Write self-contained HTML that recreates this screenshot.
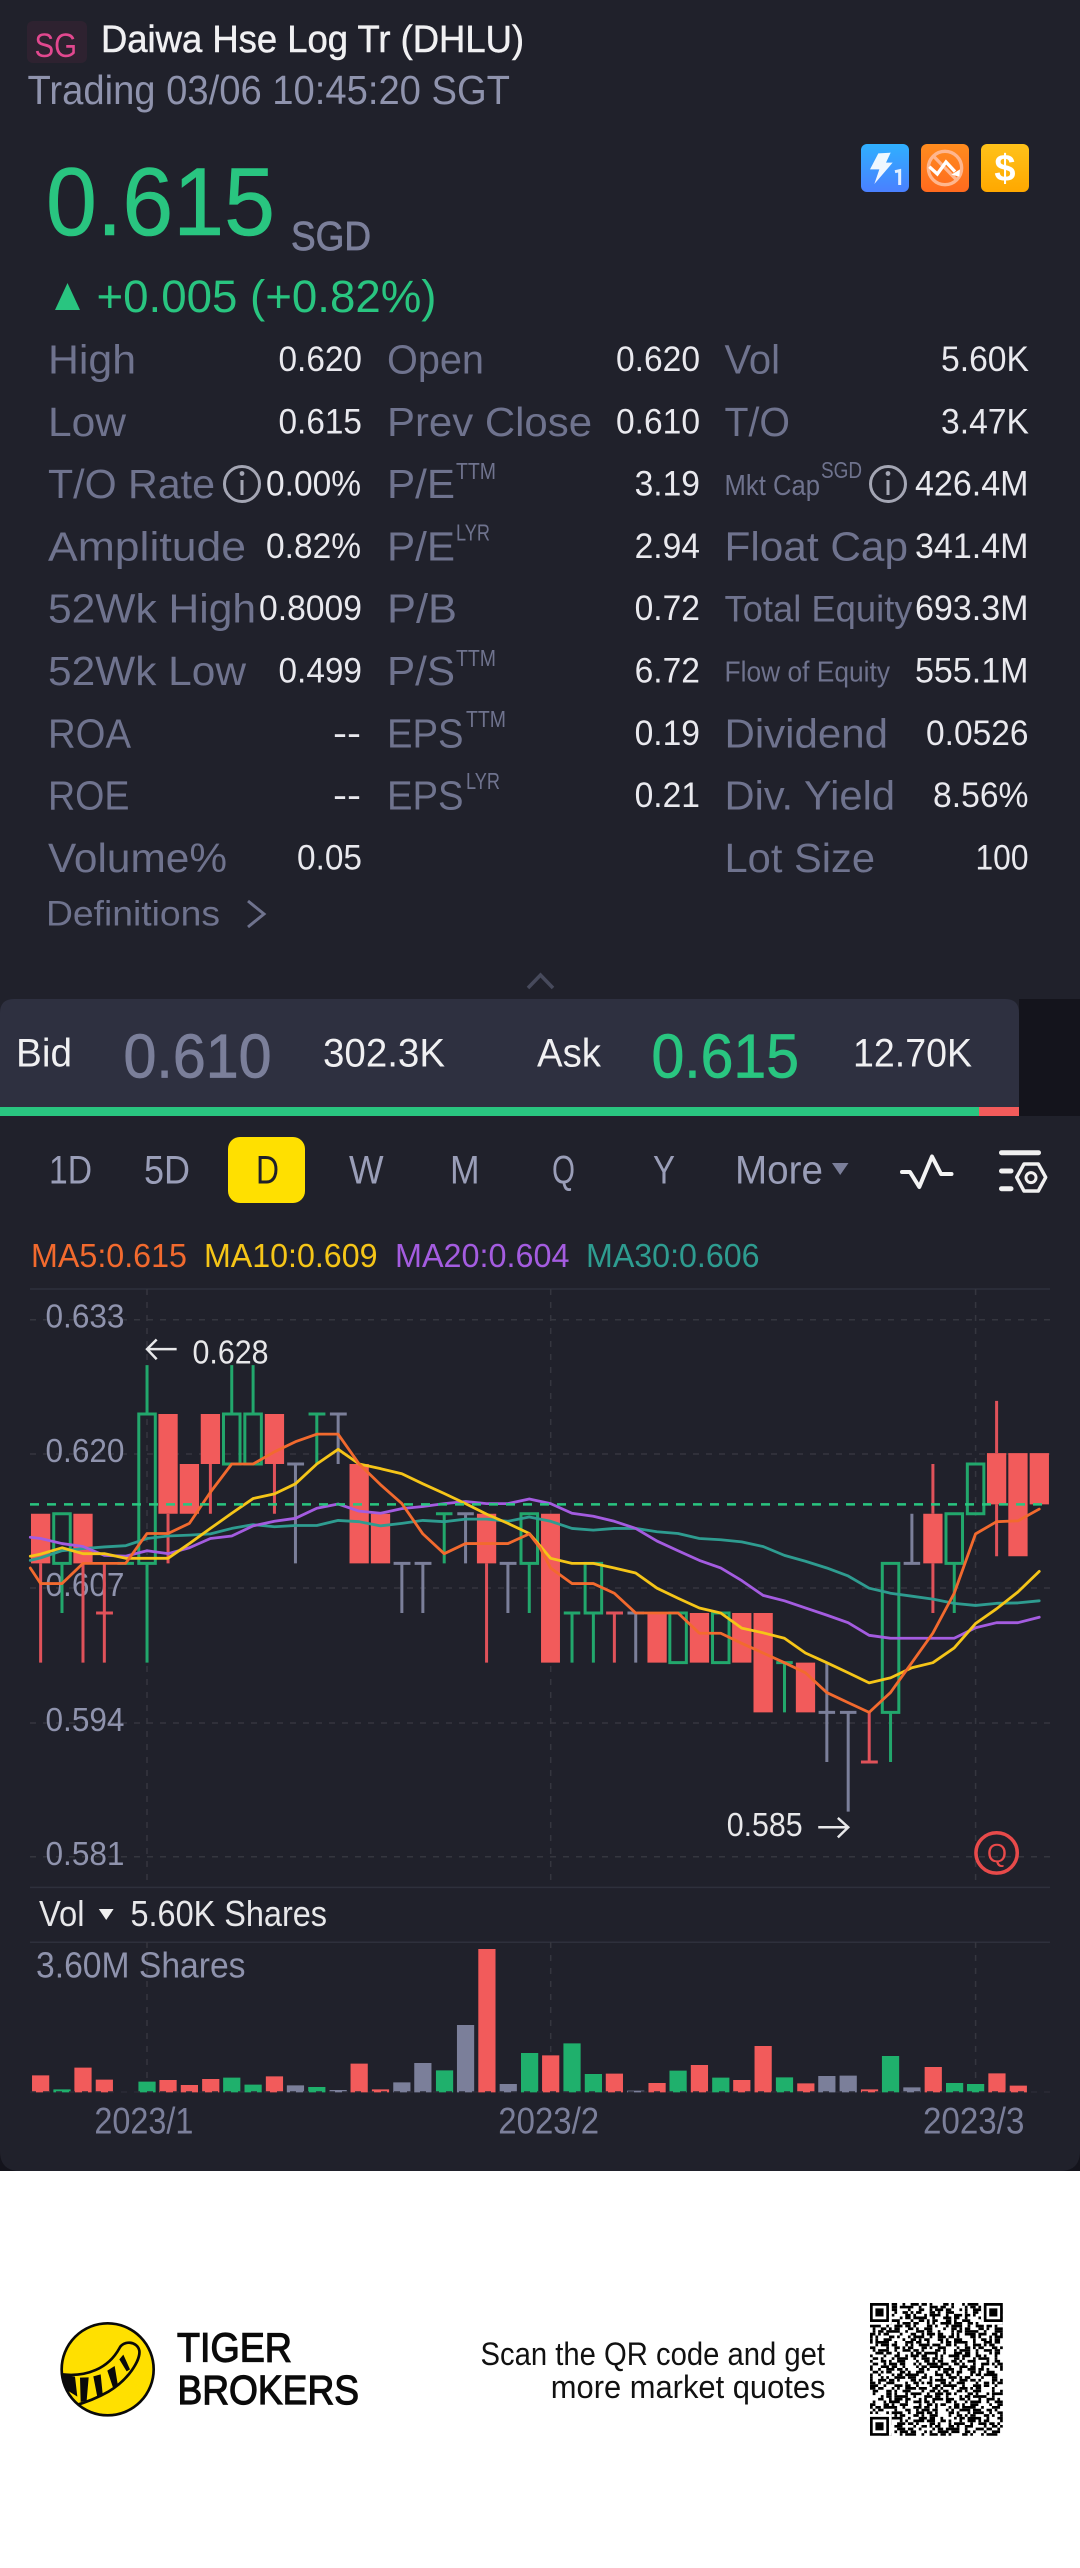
<!DOCTYPE html>
<html lang="en"><head><meta charset="utf-8"><title>Daiwa Hse Log Tr (DHLU)</title>
<style>
html,body{margin:0;padding:0;background:#fff;width:1080px;height:2568px;overflow:hidden}
svg{display:block}
text{font-family:"Liberation Sans",sans-serif;white-space:pre}
.l{font-size:41px;fill:#6f738e}
.v{font-size:35px;fill:#e9e9ee}
.s{font-size:23px;fill:#6f738e}
.m{font-size:29px;fill:#6f738e}
.tb{font-size:40px;fill:#9a9eb8}
.ax{font-size:33px;fill:#8f93ad}
.w{font-size:33px;fill:#e8e8ea}
.d{font-size:37px;fill:#7b7f9a}
.n{vector-effect:non-scaling-stroke;fill:none}
.r{stroke:#e0525a;stroke-width:3}
.g{stroke:#22a76c;stroke-width:3}
.y{stroke:#7b7f9a;stroke-width:3}
.ma{stroke-width:2.8;stroke-linejoin:round;stroke-linecap:round}
.grid{stroke:#35363f;stroke-width:1.5;stroke-dasharray:6 7;fill:none}
.solid{stroke:#2e303c;stroke-width:1.5}
.qa{stroke-dasharray:2 1 1 3 1 1 4 2 1 2 3 1 2 1 1 4}
.qb{stroke-dasharray:1 2 3 1 1 1 2 4 1 3 2 2 1 1 3}
.qc{stroke-dasharray:3 1 2 2 1 4 1 1 2 1 5 2 1 3}
.qd{stroke-dasharray:1 1 2 3 2 1 1 2 3 4 1 2 2 1}
</style></head><body>
<svg xmlns="http://www.w3.org/2000/svg" width="1080" height="2568" viewBox="0 0 1080 2568">
<defs>
<linearGradient id="gb" x1="0" y1="0" x2="0" y2="1"><stop offset="0" stop-color="#2fb0ff"/><stop offset="1" stop-color="#4a80ff"/></linearGradient>
<linearGradient id="go" x1="0" y1="0" x2="0" y2="1"><stop offset="0" stop-color="#ff8c1e"/><stop offset="1" stop-color="#ff6a1e"/></linearGradient>
<linearGradient id="gy" x1="0" y1="0" x2="0" y2="1"><stop offset="0" stop-color="#ffc21a"/><stop offset="1" stop-color="#ffa800"/></linearGradient>
<clipPath id="lc"><circle cx="233" cy="268" r="138"/></clipPath>
</defs>
<rect width="1080" height="2568" fill="#fff"/>
<rect width="1080" height="2171" fill="#14141c"/>
<path d="M0 0H1080V2151Q1080 2171 1060 2171H20Q0 2171 0 2151Z" fill="#20212b"/>

<!-- header -->
<rect x="27" y="21" width="60" height="42" rx="6" fill="#2e2230"/>
<text x="34.5" y="57" font-size="34" fill="#e2488f" textLength="42.5" lengthAdjust="spacingAndGlyphs">SG</text>
<text x="101" y="52" font-size="38" fill="#f0f0f2" stroke="#f0f0f2" stroke-width=".5" textLength="423" lengthAdjust="spacingAndGlyphs">Daiwa Hse Log Tr (DHLU)</text>
<text x="27.5" y="104" font-size="40.5" fill="#8f93ad" textLength="482.5" lengthAdjust="spacingAndGlyphs">Trading 03/06 10:45:20 SGT</text>
<text x="46" y="235" font-size="96.5" fill="#29c580" stroke="#29c580" stroke-width=".6" textLength="229" lengthAdjust="spacingAndGlyphs">0.615</text>
<text x="291" y="250" font-size="41" fill="#7b7f9a" stroke="#7b7f9a" stroke-width=".8" textLength="80" lengthAdjust="spacingAndGlyphs">SGD</text>
<path d="M67.5 283L80 310H55Z" fill="#29c580"/>
<text x="96.5" y="312" font-size="45.5" fill="#29c580" textLength="340" lengthAdjust="spacingAndGlyphs">+0.005 (+0.82%)</text>

<!-- badges -->
<rect x="861" y="144" width="48" height="48" rx="6" fill="url(#gb)"/>
<g transform="translate(840 130) scale(.33333)">
<path d="M115 70L152 68L138 98L158 98L103 162L118 118L90 118Z" fill="#fff" fill-opacity=".92"/>
<path d="M165 125L179 122V165" fill="none" stroke="#fff" stroke-opacity=".85" stroke-width="9"/>
</g>
<rect x="921" y="144" width="48" height="48" rx="6" fill="url(#go)"/>
<g transform="translate(840 130) scale(.33333)">
<circle cx="315" cy="114" r="50" fill="none" stroke="#ffb68e" stroke-width="10"/>
<path d="M280 78L350 150" stroke="#ffb68e" stroke-width="10"/>
<path d="M268 110L292 132L318 96L345 125" fill="none" stroke="#fff" stroke-width="10"/>
<path d="M360 118L358 140L334 134Z" fill="#fff"/>
</g>
<rect x="981" y="144" width="48" height="48" rx="6" fill="url(#gy)"/>
<text x="1005" y="181" font-size="38" font-weight="700" fill="#fff" text-anchor="middle">$</text>

<!-- stats labels col1 -->
<g transform="translate(0 1)">
<text class="l" x="48" y="372.5" textLength="88" lengthAdjust="spacingAndGlyphs">High</text>
<text class="l" x="48" y="434.8" textLength="78" lengthAdjust="spacingAndGlyphs">Low</text>
<text class="l" x="48" y="497.1" textLength="167" lengthAdjust="spacingAndGlyphs">T/O Rate</text>
<text class="l" x="48" y="559.4" textLength="198" lengthAdjust="spacingAndGlyphs">Amplitude</text>
<text class="l" x="48" y="621.7" textLength="208" lengthAdjust="spacingAndGlyphs">52Wk High</text>
<text class="l" x="48" y="684" textLength="198" lengthAdjust="spacingAndGlyphs">52Wk Low</text>
<text class="l" x="48" y="746.3" textLength="83" lengthAdjust="spacingAndGlyphs">ROA</text>
<text class="l" x="48" y="808.6" textLength="81.5" lengthAdjust="spacingAndGlyphs">ROE</text>
<text class="l" x="48" y="871" textLength="179" lengthAdjust="spacingAndGlyphs">Volume%</text>
</g>
<text x="46" y="925.5" font-size="35" fill="#6f738e" textLength="174" lengthAdjust="spacingAndGlyphs">Definitions</text>
<path d="M248 901L264 914L248 927" fill="none" stroke="#6f738e" stroke-width="3"/>

<!-- col1 values -->
<g transform="translate(1 0)">
<text class="v" x="277.5" y="371" textLength="83.5" lengthAdjust="spacingAndGlyphs">0.620</text>
<text class="v" x="277.5" y="433.3" textLength="83.5" lengthAdjust="spacingAndGlyphs">0.615</text>
<text class="v" x="265" y="495.6" textLength="95" lengthAdjust="spacingAndGlyphs">0.00%</text>
<text class="v" x="265" y="557.9" textLength="95" lengthAdjust="spacingAndGlyphs">0.82%</text>
<text class="v" x="258" y="620.2" textLength="103" lengthAdjust="spacingAndGlyphs">0.8009</text>
<text class="v" x="277.5" y="682.5" textLength="83.5" lengthAdjust="spacingAndGlyphs">0.499</text>
<text class="v" x="332" y="744.8" textLength="28" lengthAdjust="spacingAndGlyphs">--</text>
<text class="v" x="332" y="807.1" textLength="28" lengthAdjust="spacingAndGlyphs">--</text>
<text class="v" x="296" y="869.4" textLength="65" lengthAdjust="spacingAndGlyphs">0.05</text>
</g>

<!-- info icons -->
<g fill="none" stroke="#a4a6b4" stroke-width="3"><circle cx="242" cy="484" r="17.5"/><circle cx="888" cy="484" r="17.5"/><path d="M242 480V495M888 480V495"/></g>
<circle cx="242" cy="473.5" r="2.4" fill="#a4a6b4"/><circle cx="888" cy="473.5" r="2.4" fill="#a4a6b4"/>

<!-- col2 -->
<g transform="translate(0 1)">
<text class="l" x="387" y="372.5" textLength="97" lengthAdjust="spacingAndGlyphs">Open</text>
<text class="l" x="387" y="434.8" textLength="205" lengthAdjust="spacingAndGlyphs">Prev Close</text>
<text class="l" x="387" y="497.1" textLength="68" lengthAdjust="spacingAndGlyphs">P/E</text>
<text class="s" x="456" y="478" textLength="40" lengthAdjust="spacingAndGlyphs">TTM</text>
<text class="l" x="387" y="559.4" textLength="68" lengthAdjust="spacingAndGlyphs">P/E</text>
<text class="s" x="456" y="539.5" textLength="34" lengthAdjust="spacingAndGlyphs">LYR</text>
<text class="l" x="387" y="621.7" textLength="70" lengthAdjust="spacingAndGlyphs">P/B</text>
<text class="l" x="387" y="684" textLength="68" lengthAdjust="spacingAndGlyphs">P/S</text>
<text class="s" x="456" y="665" textLength="40" lengthAdjust="spacingAndGlyphs">TTM</text>
<text class="l" x="387" y="746.3" textLength="76.5" lengthAdjust="spacingAndGlyphs">EPS</text>
<text class="s" x="466" y="726" textLength="40" lengthAdjust="spacingAndGlyphs">TTM</text>
<text class="l" x="387" y="808.6" textLength="76.5" lengthAdjust="spacingAndGlyphs">EPS</text>
<text class="s" x="466" y="788" textLength="34" lengthAdjust="spacingAndGlyphs">LYR</text>
</g>
<g transform="translate(1 0)">
<text class="v" x="615" y="371" textLength="84" lengthAdjust="spacingAndGlyphs">0.620</text>
<text class="v" x="615" y="433.3" textLength="84" lengthAdjust="spacingAndGlyphs">0.610</text>
<text class="v" x="633.6" y="495.6" textLength="65.4" lengthAdjust="spacingAndGlyphs">3.19</text>
<text class="v" x="633.6" y="557.9" textLength="65.4" lengthAdjust="spacingAndGlyphs">2.94</text>
<text class="v" x="633.6" y="620.2" textLength="65.4" lengthAdjust="spacingAndGlyphs">0.72</text>
<text class="v" x="633.6" y="682.5" textLength="65.4" lengthAdjust="spacingAndGlyphs">6.72</text>
<text class="v" x="633.6" y="744.8" textLength="65.4" lengthAdjust="spacingAndGlyphs">0.19</text>
<text class="v" x="633.6" y="807.1" textLength="65.4" lengthAdjust="spacingAndGlyphs">0.21</text>
</g>

<!-- col3 -->
<g transform="translate(0 1)">
<text class="l" x="724.5" y="372.5" textLength="55.5" lengthAdjust="spacingAndGlyphs">Vol</text>
<text class="l" x="724.5" y="434.8" textLength="65.5" lengthAdjust="spacingAndGlyphs">T/O</text>
<text class="m" x="724.5" y="494" textLength="95.5" lengthAdjust="spacingAndGlyphs">Mkt Cap</text>
<text class="s" x="821" y="477" textLength="41" lengthAdjust="spacingAndGlyphs">SGD</text>
<text class="l" x="724.5" y="559.4" textLength="183.5" lengthAdjust="spacingAndGlyphs">Float Cap</text>
<text x="724.5" y="620.7" font-size="37" fill="#6f738e" textLength="188" lengthAdjust="spacingAndGlyphs">Total Equity</text>
<text class="m" x="724.5" y="680.7" textLength="165.5" lengthAdjust="spacingAndGlyphs">Flow of Equity</text>
<text class="l" x="724.5" y="746.3" textLength="163.5" lengthAdjust="spacingAndGlyphs">Dividend</text>
<text class="l" x="724.5" y="808.6" textLength="170.5" lengthAdjust="spacingAndGlyphs">Div. Yield</text>
<text class="l" x="724.5" y="871" textLength="150.5" lengthAdjust="spacingAndGlyphs">Lot Size</text>
</g>
<g transform="translate(1 0)">
<text class="v" x="940" y="371" textLength="88" lengthAdjust="spacingAndGlyphs">5.60K</text>
<text class="v" x="940" y="433.3" textLength="88" lengthAdjust="spacingAndGlyphs">3.47K</text>
<text class="v" x="914" y="495.6" textLength="113.5" lengthAdjust="spacingAndGlyphs">426.4M</text>
<text class="v" x="914" y="557.9" textLength="113.5" lengthAdjust="spacingAndGlyphs">341.4M</text>
<text class="v" x="914" y="620.2" textLength="113.5" lengthAdjust="spacingAndGlyphs">693.3M</text>
<text class="v" x="914" y="682.5" textLength="113.5" lengthAdjust="spacingAndGlyphs">555.1M</text>
<text class="v" x="925" y="744.8" textLength="102.5" lengthAdjust="spacingAndGlyphs">0.0526</text>
<text class="v" x="932" y="807.1" textLength="95.5" lengthAdjust="spacingAndGlyphs">8.56%</text>
<text class="v" x="974.5" y="869.4" textLength="53" lengthAdjust="spacingAndGlyphs">100</text>
</g>

<!-- chevron -->
<path d="M528 988L540.5 975L553 988" fill="none" stroke="#474a5c" stroke-width="3.5"/>

<!-- bid ask -->
<rect x="1019" y="999" width="61" height="117" fill="#14141c"/>
<path d="M0 1013Q0 999 14 999H1005Q1019 999 1019 1013V1107H0Z" fill="#2e3040"/>
<rect x="0" y="1107" width="979" height="9" fill="#29c580"/>
<rect x="979" y="1107" width="40" height="9" fill="#f25b5b"/>
<text x="16" y="1066.7" font-size="40" fill="#f0f0f2" textLength="56" lengthAdjust="spacingAndGlyphs">Bid</text>
<text x="123.5" y="1077.7" font-size="62.5" fill="#7b7f9a" stroke="#7b7f9a" stroke-width=".8" textLength="148" lengthAdjust="spacingAndGlyphs">0.610</text>
<text x="323" y="1066.7" font-size="40" fill="#f0f0f2" textLength="122" lengthAdjust="spacingAndGlyphs">302.3K</text>
<text x="537" y="1066.7" font-size="40" fill="#f0f0f2" textLength="64" lengthAdjust="spacingAndGlyphs">Ask</text>
<text x="651.5" y="1077.7" font-size="62.5" fill="#29c580" stroke="#29c580" stroke-width=".8" textLength="147.5" lengthAdjust="spacingAndGlyphs">0.615</text>
<text x="853" y="1066.7" font-size="40" fill="#f0f0f2" textLength="119" lengthAdjust="spacingAndGlyphs">12.70K</text>

<!-- tabs -->
<rect x="228" y="1137" width="77" height="66" rx="12" fill="#ffe000"/>
<text class="tb" x="49" y="1183.5" textLength="43" lengthAdjust="spacingAndGlyphs">1D</text>
<text class="tb" x="144" y="1183.5" textLength="46" lengthAdjust="spacingAndGlyphs">5D</text>
<text x="256" y="1183.5" font-size="40" fill="#1f202a" textLength="23" lengthAdjust="spacingAndGlyphs">D</text>
<text class="tb" x="349" y="1183.5" textLength="34.6" lengthAdjust="spacingAndGlyphs">W</text>
<text class="tb" x="450" y="1183.5" textLength="29.6" lengthAdjust="spacingAndGlyphs">M</text>
<text class="tb" x="552" y="1183.5" textLength="23" lengthAdjust="spacingAndGlyphs">Q</text>
<text class="tb" x="653" y="1183.5" textLength="22" lengthAdjust="spacingAndGlyphs">Y</text>
<text class="tb" x="735" y="1183.5" textLength="88" lengthAdjust="spacingAndGlyphs">More</text>
<path d="M832 1163H848.5L840.2 1175Z" fill="#7b7f9a"/>
<path d="M902 1172H910L919.3 1187L932 1156.5L941 1174H951.5" fill="none" stroke="#f4f4f4" stroke-width="4" stroke-linecap="round" stroke-linejoin="round"/>
<g fill="none" stroke="#f0f0f0" stroke-linecap="round" stroke-linejoin="round">
<path d="M1001.5 1152.7H1038.5M1001.5 1171H1011M1001.5 1188.7H1011" stroke-width="5"/>
<path d="M1016.7 1177.3L1024 1164H1038.3L1045.7 1177.3L1038.3 1191H1024Z" stroke-width="3.5"/>
<circle cx="1031" cy="1177.6" r="5" stroke-width="3"/>
</g>

<!-- MA legend -->
<text x="31" y="1267" font-size="33" fill="#f26a2e" textLength="156" lengthAdjust="spacingAndGlyphs">MA5:0.615</text>
<text x="204" y="1267" font-size="33" fill="#f5c518" textLength="173.5" lengthAdjust="spacingAndGlyphs">MA10:0.609</text>
<text x="395" y="1267" font-size="33" fill="#a45ce0" textLength="174.5" lengthAdjust="spacingAndGlyphs">MA20:0.604</text>
<text x="586" y="1267" font-size="33" fill="#2e9c90" textLength="173.6" lengthAdjust="spacingAndGlyphs">MA30:0.606</text>

<!-- grid -->
<path class="solid" d="M30 1289H1050M30 1887.4H1050M30 1942.3H1050"/>
<path class="grid" d="M30 1319.7H1050M30 1454H1050M30 1588H1050M30 1723H1050M30 1856.7H1050"/>
<path class="grid" d="M147 1289V1887M550.7 1289V1887M975.6 1289V1887M147 1942V2092M550.7 1942V2092M975.6 1942V2092"/>

<!-- axis labels -->
<text class="ax" x="45.5" y="1327.7" textLength="79" lengthAdjust="spacingAndGlyphs">0.633</text>
<text class="ax" x="45.5" y="1462" textLength="79" lengthAdjust="spacingAndGlyphs">0.620</text>
<text class="ax" x="45.5" y="1596" textLength="79" lengthAdjust="spacingAndGlyphs">0.607</text>
<text class="ax" x="45.5" y="1731" textLength="79" lengthAdjust="spacingAndGlyphs">0.594</text>
<text class="ax" x="45.5" y="1865" textLength="79" lengthAdjust="spacingAndGlyphs">0.581</text>

<!-- candles left -->
<g transform="translate(0 1270) scale(.34435 .42088)">
<path fill="#f25b5b" d="M90 579H146V697H90ZM213 579H269V697H213ZM460 342H516V579H460ZM522 461H578V579H522ZM583 342H639V461H583ZM769 342H825V461H769ZM1015 461H1071V697H1015ZM1077 579H1133V697H1077ZM1385 579H1441V697H1385Z"/>
<path class="n r" d="M118 697V933M241 697V933M303 697V933M279 815H328M488 579V697M611 461V579M797 461V579M1413 697V933"/>
<path class="n g" d="M180 697V815M427 226V342M427 697V933M673 226V342M735 226V342M920 342V461M896 342H945M1290 579V697M1266 579H1314M1537 697V815M341 697H389"/>
<path class="n g" d="M156 579H204V697H156ZM403 342H451V697H403ZM649 342H697V461H649ZM711 342H759V461H711ZM1513 579H1561V697H1513Z"/>
<path class="n y" d="M858 461V697M834 461H883M982 342V461M958 342H1007M1167 697V815M1143 697H1192M1228 697V815M1204 697H1253M1352 579V697M1328 579H1376M1475 697V815M1451 697H1500"/>
<path class="n" stroke="#e8e8ea" stroke-width="2.5" d="M513 188H427M455 165L427 188L455 212"/>
</g>
<!-- candles right -->
<g transform="translate(540 1270) scale(.34435 .42088)">
<path fill="#f25b5b" d="M3 579H58V933H3ZM312 815H368V933H312ZM435 815H491V933H435ZM558 815H614V933H558ZM620 815H676V1051H620ZM743 933H799V1051H743ZM1113 579H1169V697H1113ZM1298 435H1354V557H1298ZM1360 435H1416V680H1360ZM1422 435H1478V557H1422Z"/>
<path class="n r" d="M216 815V933M192 815H241M956 1051V1169M932 1169H981M1141 461V579M1141 697V815M1326 311V435M1326 557V680"/>
<path class="n g" d="M93 815V933M69 815H117M155 815V933M710 933V1051M686 933H734M1018 1051V1169M1203 697V815"/>
<path class="n g" d="M131 697H179V815H131ZM377 815H425V933H377ZM501 815H549V933H501ZM994 697H1042V1051H994ZM1179 579H1227V697H1179ZM1241 461H1289V579H1241Z"/>
<path class="n y" d="M278 815V933M254 815H302M833 933V1169M809 1051H857M895 1051V1287M871 1051H919M1080 579V697M1056 697H1104"/>
<path class="n" stroke="#e8e8ea" stroke-width="2.5" d="M808 1324H895M865 1302L895 1324L865 1348"/>
<ellipse class="n" cx="1326" cy="1385" rx="60" ry="48" stroke="#e84a4a" stroke-width="3.5"/>
</g>
<text x="987" y="1862" font-size="26" fill="#e84a4a" textLength="20" lengthAdjust="spacingAndGlyphs">Q</text>
<text x="192.5" y="1363.4" font-size="33" fill="#e8e8ea" textLength="76" lengthAdjust="spacingAndGlyphs">0.628</text>
<text x="726.7" y="1836" font-size="33" fill="#e8e8ea" textLength="76" lengthAdjust="spacingAndGlyphs">0.585</text>

<!-- MA lines -->
<g transform="translate(0 1270) scale(.34435 .42088)">
<polyline class="n ma" stroke="#2e9c90" points="88,690 118,684 180,667 241,662 303,658 365,655 427,638 488,632 550,630 611,627 673,614 735,605 797,610 858,607 920,607 982,595 1043,598 1105,608 1167,602 1228,595 1290,598 1352,592 1413,592 1475,597 1537,587 1599,597 1661,614 1723,618 1784,614 1846,614 1908,622 1969,626 2031,638 2093,641 2154,646 2216,657 2278,678 2339,692 2401,708 2463,727 2524,756 2586,768 2648,775 2709,782 2771,792 2833,797 2894,792 2956,791 3018,786"/>
<polyline class="n ma" stroke="#a45ce0" points="88,635 118,638 180,650 241,657 303,678 365,680 427,667 488,674 550,660 611,638 673,632 735,608 797,597 858,590 920,566 982,556 1043,573 1105,578 1167,567 1228,562 1290,555 1352,550 1413,555 1475,555 1537,544 1599,555 1661,578 1723,585 1784,597 1846,614 1908,644 1969,667 2031,690 2093,708 2154,738 2216,773 2278,786 2339,803 2401,820 2463,838 2524,868 2586,875 2648,875 2709,875 2771,875 2833,850 2894,838 2956,838 3018,825"/>
<polyline class="n ma" stroke="#f5c518" points="88,680 118,675 180,660 241,674 303,674 365,685 427,685 488,685 550,650 611,614 673,578 735,543 797,532 858,508 920,461 982,426 1043,461 1105,472 1167,484 1228,508 1290,531 1352,555 1413,580 1475,602 1537,626 1568,655 1599,685 1661,697 1723,697 1784,708 1846,720 1908,756 1969,780 2031,803 2093,815 2154,851 2216,862 2278,875 2339,910 2401,933 2463,957 2524,981 2586,969 2648,945 2709,933 2771,898 2833,840 2894,805 2956,765 3018,716"/>
<polyline class="n ma" stroke="#f26a2e" points="88,708 118,745 180,745 241,697 303,697 365,697 427,626 488,626 550,602 611,528 673,461 735,461 797,432 858,408 920,390 982,390 1043,461 1105,510 1167,555 1228,627 1290,674 1352,650 1413,650 1475,650 1537,627 1568,660 1599,708 1661,745 1723,745 1784,768 1846,815 1908,815 1969,815 2031,863 2093,863 2154,887 2216,910 2278,933 2339,957 2401,1004 2463,1028 2524,1051 2586,1004 2648,933 2709,863 2771,768 2833,627 2894,598 2956,596 3018,568"/>
</g>
<path d="M30 1504.4H1050" stroke="#29c580" stroke-width="2.5" stroke-dasharray="9 8" fill="none"/>

<!-- vol header -->
<text x="39" y="1926" font-size="36" fill="#e8e8ea" textLength="45.5" lengthAdjust="spacingAndGlyphs">Vol</text>
<path d="M98.8 1909H113.6L106.2 1920Z" fill="#f0f0f0"/>
<text x="130.5" y="1926" font-size="36" fill="#e8e8ea" textLength="196.5" lengthAdjust="spacingAndGlyphs">5.60K Shares</text>
<text x="36" y="1977.5" font-size="36" fill="#8f93ad" textLength="209.5" lengthAdjust="spacingAndGlyphs">3.60M Shares</text>

<!-- volume bars -->
<g transform="translate(0 1880) scale(.34435 .33333)">
<path fill="#f25b5b" d="M93 586H143V637H93ZM216 563H266V637H216ZM278 599H328V637H278ZM463 600H513V637H463ZM525 615H575V637H525ZM587 597H637V637H587ZM772 589H822V637H772ZM1018 551H1068V637H1018ZM1080 628H1130V637H1080ZM1389 207H1439V637H1389Z"/>
<path fill="#1fb06c" d="M155 628H205V637H155ZM402 605H452V637H402ZM648 593H698V637H648ZM710 614H760V637H710ZM895 621H945V637H895ZM1266 571H1316V637H1266ZM1513 519H1563V637H1513Z"/>
<path fill="#7b7f9a" d="M833 616H883V637H833ZM957 630H1007V637H957ZM1142 607H1192V637H1142ZM1203 549H1253V637H1203ZM1327 435H1377V637H1327ZM1451 612H1501V637H1451Z"/>
</g>
<g transform="translate(540 1880) scale(.34435 .33333)">
<path fill="#f25b5b" d="M6 526H56V637H6ZM191 581H241V637H191ZM315 609H365V637H315ZM438 555H488V637H438ZM561 600H611V637H561ZM623 498H673V637H623ZM747 610H797V637H747ZM932 628H982V637H932ZM1117 561H1167V637H1117ZM1302 580H1352V637H1302ZM1364 617H1414V637H1364Z"/>
<path fill="#1fb06c" d="M68 490H118V637H68ZM130 582H180V637H130ZM376 572H426V637H376ZM500 593H550V637H500ZM685 592H735V637H685ZM993 528H1043V637H993ZM1179 609H1229V637H1179ZM1240 612H1290V637H1240Z"/>
<path fill="#7b7f9a" d="M253 632H303V637H253ZM808 588H858V637H808ZM870 587H920V637H870ZM1055 622H1105V637H1055Z"/>
</g>
<path d="M30 2092H1050" stroke="#2a2b36" stroke-width="1.5" stroke-dasharray="6 7" fill="none"/>

<!-- dates -->
<text class="d" x="94.4" y="2133.5" textLength="99" lengthAdjust="spacingAndGlyphs">2023/1</text>
<text class="d" x="498.3" y="2133.5" textLength="100.8" lengthAdjust="spacingAndGlyphs">2023/2</text>
<text class="d" x="923" y="2133.5" textLength="101.4" lengthAdjust="spacingAndGlyphs">2023/3</text>

<!-- footer logo -->
<g transform="translate(30 2280) scale(.33333)">
<circle cx="233" cy="268" r="138" fill="#ffe000" stroke="#0a0a0a" stroke-width="8"/>
<g clip-path="url(#lc)">
<path d="M95 283C170 292 235 265 268 205C280 180 322 183 328 212C332 240 295 300 235 335C205 352 175 365 130 378" fill="none" stroke="#0a0a0a" stroke-width="8"/>
<path fill="#0a0a0a" d="M95 283L135 290L142 350L110 330ZM150 293L176 292L170 362L152 366ZM190 289L212 283L218 342L202 351ZM232 272L254 258L264 318L250 326ZM268 238L280 224L300 268L290 274Z"/>
</g>
</g>
<text x="177" y="2361.7" font-size="41" fill="#0a0a0a" stroke="#0a0a0a" stroke-width="1.2" textLength="115" lengthAdjust="spacingAndGlyphs">TIGER</text>
<text x="177.5" y="2404" font-size="41" fill="#0a0a0a" stroke="#0a0a0a" stroke-width="1.2" textLength="181.5" lengthAdjust="spacingAndGlyphs">BROKERS</text>
<text x="480.5" y="2365" font-size="32" fill="#111" textLength="344.5" lengthAdjust="spacingAndGlyphs">Scan the QR code and get</text>
<text x="550.8" y="2398" font-size="32" fill="#111" textLength="274.7" lengthAdjust="spacingAndGlyphs">more market quotes</text>

<!-- QR -->
<g transform="translate(870 2303) scale(2.71)" stroke="#000" stroke-width="1" fill="none">
<path class="qa" d="M0 .5H49" stroke-dashoffset="3"/>
<path class="qc" d="M0 1.5H49" stroke-dashoffset="7"/>
<path class="qb" d="M0 2.5H49" stroke-dashoffset="1"/>
<path class="qd" d="M0 3.5H49" stroke-dashoffset="11"/>
<path class="qa" d="M0 4.5H49" stroke-dashoffset="17"/>
<path class="qc" d="M0 5.5H49" stroke-dashoffset="2"/>
<path class="qd" d="M0 6.5H49" stroke-dashoffset="5"/>
<path class="qb" d="M0 7.5H49" stroke-dashoffset="13"/>
<path class="qa" d="M0 8.5H49" stroke-dashoffset="9"/>
<path class="qd" d="M0 9.5H49" stroke-dashoffset="19"/>
<path class="qc" d="M0 10.5H49" stroke-dashoffset="12"/>
<path class="qb" d="M0 11.5H49" stroke-dashoffset="4"/>
<path class="qa" d="M0 12.5H49" stroke-dashoffset="23"/>
<path class="qd" d="M0 13.5H49" stroke-dashoffset="8"/>
<path class="qc" d="M0 14.5H49" stroke-dashoffset="16"/>
<path class="qb" d="M0 15.5H49" stroke-dashoffset="21"/>
<path class="qd" d="M0 16.5H49" stroke-dashoffset="14"/>
<path class="qa" d="M0 17.5H49" stroke-dashoffset="6"/>
<path class="qc" d="M0 18.5H49" stroke-dashoffset="27"/>
<path class="qb" d="M0 19.5H49" stroke-dashoffset="10"/>
<path class="qa" d="M0 20.5H49" stroke-dashoffset="29"/>
<path class="qd" d="M0 21.5H49" stroke-dashoffset="3"/>
<path class="qb" d="M0 22.5H49" stroke-dashoffset="18"/>
<path class="qc" d="M0 23.5H49" stroke-dashoffset="25"/>
<path class="qa" d="M0 24.5H49" stroke-dashoffset="12"/>
<path class="qd" d="M0 25.5H49" stroke-dashoffset="22"/>
<path class="qc" d="M0 26.5H49" stroke-dashoffset="5"/>
<path class="qb" d="M0 27.5H49" stroke-dashoffset="30"/>
<path class="qa" d="M0 28.5H49" stroke-dashoffset="15"/>
<path class="qd" d="M0 29.5H49" stroke-dashoffset="7"/>
<path class="qc" d="M0 30.5H49" stroke-dashoffset="20"/>
<path class="qb" d="M0 31.5H49" stroke-dashoffset="26"/>
<path class="qd" d="M0 32.5H49" stroke-dashoffset="1"/>
<path class="qa" d="M0 33.5H49" stroke-dashoffset="24"/>
<path class="qc" d="M0 34.5H49" stroke-dashoffset="9"/>
<path class="qb" d="M0 35.5H49" stroke-dashoffset="16"/>
<path class="qa" d="M0 36.5H49" stroke-dashoffset="2"/>
<path class="qd" d="M0 37.5H49" stroke-dashoffset="28"/>
<path class="qc" d="M0 38.5H49" stroke-dashoffset="13"/>
<path class="qb" d="M0 39.5H49" stroke-dashoffset="6"/>
<path class="qa" d="M0 40.5H49" stroke-dashoffset="31"/>
<path class="qd" d="M0 41.5H49" stroke-dashoffset="17"/>
<path class="qc" d="M0 42.5H49" stroke-dashoffset="11"/>
<path class="qb" d="M0 43.5H49" stroke-dashoffset="23"/>
<path class="qa" d="M0 44.5H49" stroke-dashoffset="8"/>
<path class="qd" d="M0 45.5H49" stroke-dashoffset="4"/>
<path class="qc" d="M0 46.5H49" stroke-dashoffset="19"/>
<path class="qb" d="M0 47.5H49" stroke-dashoffset="14"/>
<path class="qa" d="M0 48.5H49" stroke-dashoffset="26"/>
</g>
<g transform="translate(870 2303) scale(2.71)">
<path fill="#fff" d="M0 0H8V8H0ZM41 0H49V8H41ZM0 41H8V49H0Z"/>
<path fill="#000" fill-rule="evenodd" d="M0 0H7V7H0ZM1 1V6H6V1ZM2 2H5V5H2ZM42 0H49V7H42ZM43 1V6H48V1ZM44 2H47V5H44ZM0 42H7V49H0ZM1 43V48H6V43ZM2 44H5V47H2Z"/>
</g>
</svg>
</body></html>
